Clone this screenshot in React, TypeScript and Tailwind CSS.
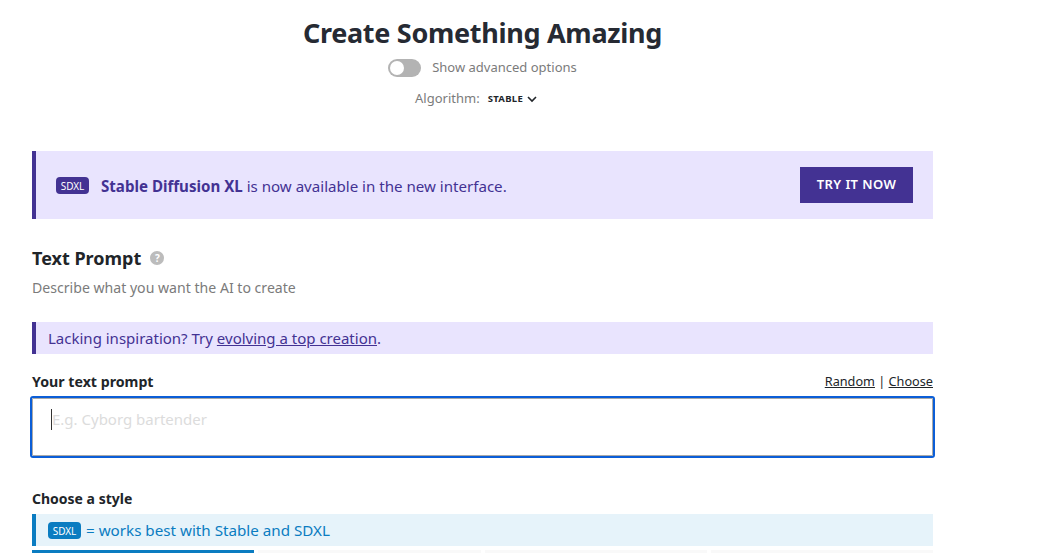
import React from "react";

function Badge({ className }: { className: string }) {
  return (
    <span className={`inline-flex items-center justify-center w-[33px] h-[17px] rounded-[4px] text-white text-[10px] leading-none ${className}`}>
      SDXL
    </span>
  );
}

export default function App() {
  return (
    <div className="w-[1042px] h-[553px] overflow-hidden bg-white font-['Noto_Sans',sans-serif] text-[#212529]">
      <div className="w-[901px] ml-[32px]">
        <div className="flex flex-col items-center h-[151px]">
          <h1 className="mt-[13px] h-[40px] text-[27px] tracking-[-0.3px] leading-[40px] font-bold text-[#262a33]">Create Something Amazing</h1>
          <div className="mt-[5px] h-[20px] flex items-center gap-[11px] text-[13px] text-[#7b7b7b]">
            <span className="relative w-[33px] h-[18px] rounded-full bg-[#b3b3b3]">
              <span className="absolute left-[2px] top-[2px] w-[14px] h-[14px] rounded-full bg-white" />
            </span>
            <span>Show advanced options</span>
          </div>
          <div className="mt-[11px] mr-[12px] h-[20px] flex items-center gap-[8px] text-[13px] text-[#7b7b7b]">
            <span>Algorithm:</span>
            <span className="flex items-center gap-[3px] text-[9.5px] font-bold tracking-[0.3px] text-[#212529]">
              STABLE
              <svg width="12" height="12" viewBox="0 0 24 24" fill="none" stroke="#212529" strokeWidth="3.2">
                <path d="M4 8l8 8 8-8" />
              </svg>
            </span>
          </div>
        </div>

        <div className="h-[68px] flex items-center justify-between border-l-[4px] border-[#433293] bg-[#e9e4fe] pl-[20px] pr-[20px]">
          <div className="flex items-center gap-[12px] pt-[2px] text-[15.1px] text-[#433293]">
            <Badge className="bg-[#433293]" />
            <span><b className="font-bold">Stable Diffusion XL</b> is now available in the new interface.</span>
          </div>
          <button className="w-[113px] h-[36px] bg-[#433293] text-white text-[13px] font-semibold tracking-[0.4px]">TRY IT NOW</button>
        </div>

        <div className="mt-[26px] flex items-center gap-[9px] h-[26px]">
          <h2 className="text-[18px] leading-[26px] font-bold text-[#212529]">Text Prompt</h2>
          <span className="w-[14px] h-[14px] rounded-full bg-[#bcbcbc] flex items-center justify-center text-white text-[10px] font-bold leading-none">?</span>
        </div>
        <p className="mt-[7px] h-[20px] text-[14.1px] leading-[20px] text-[#7b7b7b]">Describe what you want the AI to create</p>

        <div className="mt-[24px] h-[32px] flex items-center border-l-[4px] border-[#433293] bg-[#e9e4fe] pl-[12px] pt-[1px] text-[15px] text-[#433293]">
          <span>Lacking inspiration? Try <a className="underline">evolving a top creation</a>.</span>
        </div>

        <div className="mt-[18px] h-[20px] flex items-center justify-between">
          <span className="text-[14.2px] font-bold">Your text prompt</span>
          <span className="text-[12.7px] text-[#212529]"><a className="underline">Random</a> | <a className="underline">Choose</a></span>
        </div>

        <div className="mt-[6px] h-[58px] rounded-[1px] border border-[#a9a9a9] outline-2 outline-[#0b5ed7] bg-white pl-[18px] pt-[8px]">
          <div className="flex items-center h-[24px] text-[15px] text-[#dcdcdc]">
            <span className="w-px h-[21px] bg-[#333]" />
            <span>E.g. Cyborg bartender</span>
          </div>
        </div>

        <div className="mt-[32px] h-[20px] flex items-center text-[14px] font-bold">Choose a style</div>

        <div className="mt-[6px] h-[32px] flex items-center gap-[5px] border-l-[4px] border-[#0a7cc1] bg-[#e6f3fa] pl-[12px] pt-[1px] text-[15.2px] text-[#0a7cc1]">
          <Badge className="bg-[#0a7cc1]" />
          <span>= works best with Stable and SDXL</span>
        </div>

        <div className="mt-[4px] grid grid-cols-4 gap-[4px] h-[10px]">
          <div className="border-t-[3px] border-[#0a7cc1] bg-white" />
          <div className="bg-[#f9f9f9]" />
          <div className="bg-[#f9f9f9]" />
          <div className="bg-[#f9f9f9]" />
        </div>
      </div>
    </div>
  );
}
